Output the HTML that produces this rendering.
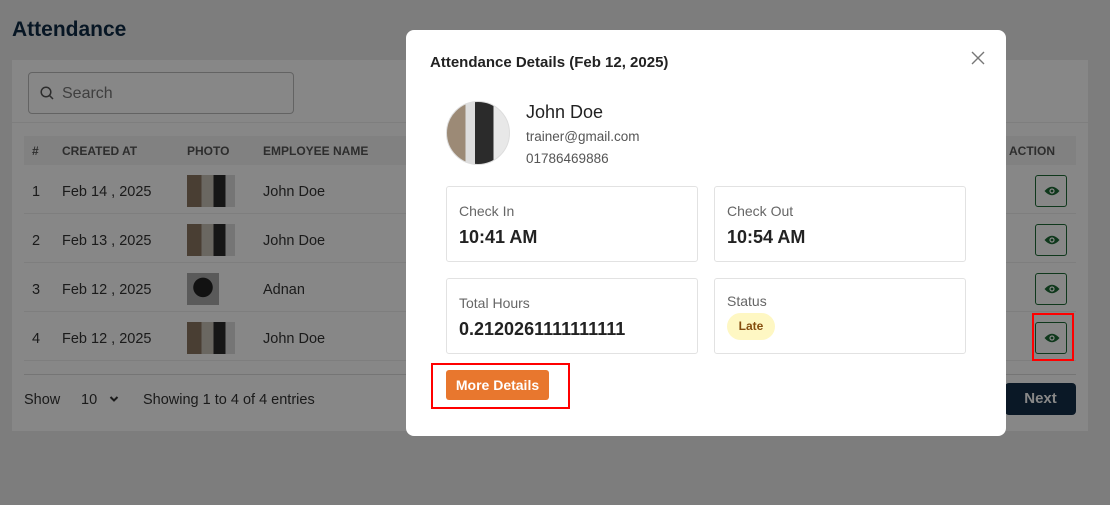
<!DOCTYPE html>
<html><head><meta charset="utf-8"><style>
*{box-sizing:border-box;margin:0;padding:0}
body{width:1110px;height:505px;overflow:hidden;background:#ececec;font-family:"Liberation Sans",sans-serif;position:relative;color:#333}
.title{position:absolute;left:12px;top:18px;font-size:21px;font-weight:bold;color:#0f2a44}
.card{position:absolute;left:12px;top:60px;width:1076px;height:371px;background:#fff}
.search{position:absolute;left:16px;top:12px;width:266px;height:42px;border:1px solid #bbb;border-radius:4px;font-size:16px;color:#777;padding:12px 0 0 33px}
.search svg{position:absolute;left:11px;top:13px}
.hline{position:absolute;left:0;width:1076px;height:1px;background:#eee}
.thead{position:absolute;left:12px;top:76px;width:1052px;height:29px;background:#f4f4f4;font-size:12px;font-weight:bold;color:#555}
.thead span,.row span{position:absolute;top:0}
.thead span{top:8px}
.row{position:absolute;left:12px;width:1052px;height:49px;border-bottom:1px solid #eee;font-size:14.5px;color:#333}
.row span{top:19px}
.ph{position:absolute;left:163px;top:10px;width:48px;height:32px;background:linear-gradient(90deg,#8a7560 0 30%,#c9c2b8 30% 55%,#2a2a2a 55% 80%,#ddd 80%)}
.ph2{width:32px;background:radial-gradient(circle at 50% 45%,#222 0 40%,#aaa 42%)}
.eye{position:absolute;left:1011px;top:10px;width:32px;height:32px;border:1px solid #1e6b36;border-radius:3px}
.eye svg{position:absolute;left:8px;top:9px}
.foot{position:absolute;top:332px;font-size:14.5px;color:#333}
.next{position:absolute;left:993px;top:323px;width:71px;height:32px;background:#132f48;border-radius:4px;color:#fff;font-weight:bold;font-size:15px;text-align:center;line-height:32px}
.ov{position:absolute;inset:0;background:rgba(0,0,0,0.47)}
.modal{position:absolute;left:406px;top:30px;width:600px;height:406px;background:#fff;border-radius:8px}
.mt{position:absolute;left:24px;top:24px;font-size:15px;font-weight:bold;color:#222}
.av{position:absolute;left:40px;top:71px;width:64px;height:64px;border-radius:50%;background:linear-gradient(90deg,#9c8a76 0 30%,#ddd 30% 45%,#2b2b2b 45% 75%,#e8e8e8 75%);border:1px solid #ddd}
.box{position:absolute;width:252px;height:76px;border:1px solid #e2e2e2;border-radius:3px}
.lb{position:absolute;left:12px;top:16px;font-size:14px;color:#666}
.vl{position:absolute;left:12px;top:40px;font-size:18px;font-weight:bold;color:#222}
.late{position:absolute;left:12px;top:34px;width:48px;height:27px;border-radius:14px;background:#fef7c3;color:#854d0e;font-size:12px;font-weight:bold;text-align:center;line-height:27px}
.btn{position:absolute;left:40px;top:340px;width:103px;height:30px;background:#e8772e;border-radius:3px;color:#fff;font-size:14px;font-weight:bold;text-align:center;line-height:30px}
.red{position:absolute;border:2px solid #f00}
</style></head><body>
<div class="title">Attendance</div>
<div class="card">
 <div class="search"><svg width="14" height="14" viewBox="0 0 14 14"><circle cx="6" cy="6" r="4.8" fill="none" stroke="#555" stroke-width="1.5"/><path d="M9.5 9.5L13 13" stroke="#555" stroke-width="1.5"/></svg>Search</div>
 <div class="hline" style="top:62px"></div>
 <div class="thead"><span style="left:8px">#</span><span style="left:38px">CREATED AT</span><span style="left:163px">PHOTO</span><span style="left:239px">EMPLOYEE NAME</span><span style="left:985px">ACTION</span></div>
 <div class="row" style="top:105px"><span style="left:8px">1</span><span style="left:38px">Feb 14 , 2025</span><div class="ph"></div><span style="left:239px">John Doe</span><div class="eye"><svg width="16" height="12" viewBox="0 0 16 12"><path d="M0.5 6Q8 -2.5 15.5 6Q8 14.5 0.5 6Z" fill="#1e6b36"/><circle cx="8" cy="6" r="2.6" fill="#fff"/><circle cx="8" cy="6" r="1.4" fill="#1e6b36"/></svg></div></div>
 <div class="row" style="top:154px"><span style="left:8px">2</span><span style="left:38px">Feb 13 , 2025</span><div class="ph"></div><span style="left:239px">John Doe</span><div class="eye"><svg width="16" height="12" viewBox="0 0 16 12"><path d="M0.5 6Q8 -2.5 15.5 6Q8 14.5 0.5 6Z" fill="#1e6b36"/><circle cx="8" cy="6" r="2.6" fill="#fff"/><circle cx="8" cy="6" r="1.4" fill="#1e6b36"/></svg></div></div>
 <div class="row" style="top:203px"><span style="left:8px">3</span><span style="left:38px">Feb 12 , 2025</span><div class="ph ph2"></div><span style="left:239px">Adnan</span><div class="eye"><svg width="16" height="12" viewBox="0 0 16 12"><path d="M0.5 6Q8 -2.5 15.5 6Q8 14.5 0.5 6Z" fill="#1e6b36"/><circle cx="8" cy="6" r="2.6" fill="#fff"/><circle cx="8" cy="6" r="1.4" fill="#1e6b36"/></svg></div></div>
 <div class="row" style="top:252px"><span style="left:8px">4</span><span style="left:38px">Feb 12 , 2025</span><div class="ph"></div><span style="left:239px">John Doe</span><div class="eye"><svg width="16" height="12" viewBox="0 0 16 12"><path d="M0.5 6Q8 -2.5 15.5 6Q8 14.5 0.5 6Z" fill="#1e6b36"/><circle cx="8" cy="6" r="2.6" fill="#fff"/><circle cx="8" cy="6" r="1.4" fill="#1e6b36"/></svg></div></div>
 <div class="hline" style="top:314px;left:12px;width:1052px;background:#ddd"></div>
 <div class="foot" style="left:12px">Show</div>
 <div class="foot" style="left:69px">10</div>
 <svg style="position:absolute;left:97px;top:335px" width="10" height="8" viewBox="0 0 10 8"><path d="M1.5 2L5 5.5L8.5 2" fill="none" stroke="#333" stroke-width="2"/></svg>
 <div class="foot" style="left:131px">Showing 1 to 4 of 4 entries</div>
 <div class="next">Next</div>
</div>
<div class="ov"></div>
<div class="red" style="left:1032px;top:313px;width:42px;height:48px"></div>
<div class="modal">
 <div class="mt">Attendance Details (Feb 12, 2025)</div>
 <svg style="position:absolute;left:565px;top:21px" width="14" height="14" viewBox="0 0 14 14"><path d="M1 1L13 13M13 1L1 13" stroke="#777" stroke-width="1.4"/></svg>
 <div class="av"></div>
 <div style="position:absolute;left:120px;top:72px;font-size:18px;color:#222">John Doe</div>
 <div style="position:absolute;left:120px;top:99px;font-size:13.5px;color:#555">trainer@gmail.com</div>
 <div style="position:absolute;left:120px;top:121px;font-size:13.5px;color:#555">01786469886</div>
 <div class="box" style="left:40px;top:156px"><div class="lb">Check In</div><div class="vl">10:41 AM</div></div>
 <div class="box" style="left:308px;top:156px"><div class="lb">Check Out</div><div class="vl">10:54 AM</div></div>
 <div class="box" style="left:40px;top:248px"><div class="lb">Total Hours</div><div class="vl">0.2120261111111111</div></div>
 <div class="box" style="left:308px;top:248px"><div class="lb" style="top:14px">Status</div><div class="late">Late</div></div>
 <div class="btn">More Details</div>
 <div class="red" style="left:25px;top:333px;width:139px;height:46px"></div>
</div>
</body></html>
